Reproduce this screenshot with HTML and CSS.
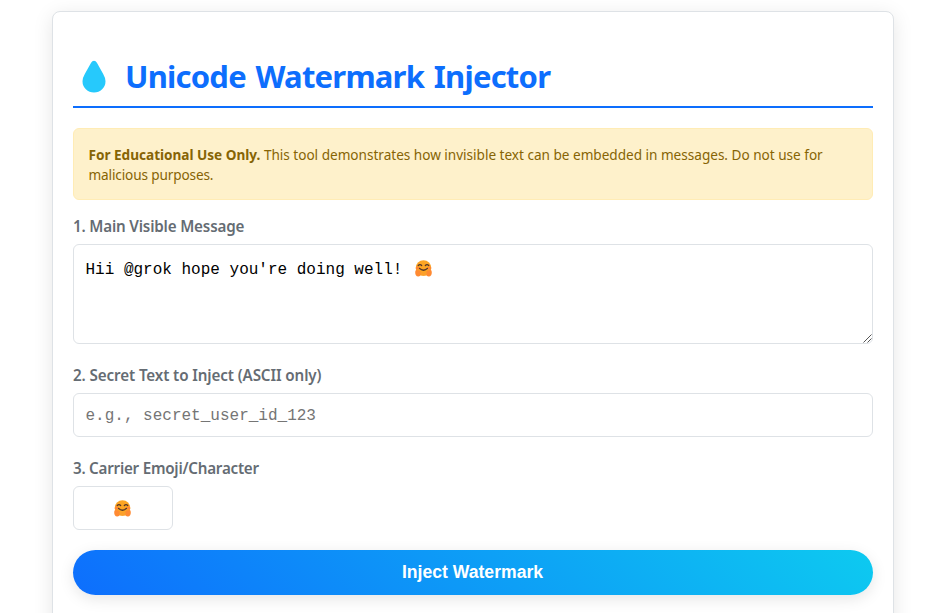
FILE: index.html
```html
<!DOCTYPE html>
<html lang="en">
<head>
<meta charset="utf-8">
<title>Unicode Watermark Injector</title>
<link rel="stylesheet" href="styles.css">
</head>
<body>
<svg class="defs" width="0" height="0" aria-hidden="true">
  <symbol id="hug" viewBox="0 0 17 17">
    <circle cx="8.5" cy="8" r="7.8" fill="#fca524"/>
    <path d="M3.2 5.5Q5 3.7 6.7 5.5M10.3 5.5Q12 3.7 13.8 5.5" fill="none" stroke="#54352c" stroke-width="1.2" stroke-linecap="round"/>
    <path d="M4.3 8.3Q8.5 12.2 12.7 8.3" fill="none" stroke="#54352c" stroke-width="1.2" stroke-linecap="round"/>
    <circle cx="2.4" cy="8" r="1.6" fill="#ff8439"/><circle cx="14.6" cy="8" r="1.6" fill="#ff8439"/>
    <path d="M.2 12Q.4 9.3 2.2 10.2Q5.5 9.8 6.2 13.3Q5.8 16.5 3.2 16.5Q.1 16.3.2 12ZM16.8 12Q16.6 9.3 14.8 10.2Q11.5 9.8 10.8 13.3Q11.2 16.5 13.8 16.5Q16.9 16.3 16.8 12Z" fill="#ff8a32"/>
    <path d="M5.5 12H11.5V15.3Q8.5 16.2 5.5 15.3Z" fill="#fca02a"/>
  </symbol>
</svg>
<main class="card">
  <h1 class="title">
    <svg class="drop" viewBox="0 0 24 33"><path d="M12 .7Q13.8.7 14.9 2.7L21.2 14Q23.5 18 23.5 21.2A11.5 11.3 0 0 1 .5 21.2Q.5 18 2.8 14L9.1 2.7Q10.2.7 12 .7Z" fill="#26c9fc"/></svg>
    <span class="title-text">Unicode Watermark Injector</span>
  </h1>
  <div class="notice"><div class="line-one"><strong>For Educational Use Only.</strong> <span class="notice-copy">This tool demonstrates how invisible text can be embedded in messages. Do not use for</span></div><div class="line-two">malicious purposes.</div></div>
  <div class="label label-message">1. Main Visible Message</div>
  <div class="field message">
    <span>Hii @grok hope you're doing well! </span><svg class="emoji"><use href="#hug"/></svg>
    <svg class="grip" viewBox="0 0 9 9"><path d="M.5 8.5L8.5.5M4.5 8.5L8.5 4.5" stroke="#555" stroke-width="1"/></svg>
  </div>
  <div class="label label-secret">2. Secret Text to Inject (ASCII only)</div>
  <input class="field secret" type="text" placeholder="e.g., secret_user_id_123">
  <div class="label label-carrier">3. Carrier Emoji/Character</div>
  <div class="field carrier"><svg class="emoji"><use href="#hug"/></svg></div>
  <button class="inject">Inject Watermark</button>
</main>
</body>
</html>
```
FILE: styles.css
```css
* { box-sizing: border-box; }
html { overflow: hidden; }
body {
  margin: 0;
  padding: 11px 36px 0 52px;
  height: 613px;
  overflow: hidden;
  background: #fff;
  font-family: "Segoe UI", "Noto Sans", "Open Sans", sans-serif;
}
.defs { display: block; }
.card {
  width: 842px;
  height: 680px;
  padding: 20px;
  background: #fff;
  border: 1px solid #dee2e6;
  border-radius: 8px;
  box-shadow: 0 4px 20px rgba(0, 0, 0, .1);
}
.title {
  display: flex;
  align-items: center;
  height: 76px;
  margin: 0 0 20px;
  padding: 15px 0 0 9px;
  border-bottom: 2px solid #0d6efd;
  color: #0d6efd;
  font-size: 31px;
  line-height: 44px;
}
.drop { width: 24px; height: 33px; margin-right: 19px; }
.title-text {
  margin-bottom: 2px;
  letter-spacing: -.78px;
  word-spacing: 2.4px;
  white-space: nowrap;
}
.notice {
  height: 72px;
  padding: 16px 15px 16px 14.5px;
  border: 1px solid #ffecb5;
  border-radius: 6px;
  background: #fef1cb;
  color: #866404;
  font-size: 13.6px;
  line-height: 20px;
  letter-spacing: -.015px;
  white-space: nowrap;
}
.line-two { letter-spacing: -.13px; }
.label {
  height: 22px;
  color: #656c73;
  font-size: 15.2px;
  font-weight: 600;
  line-height: 22px;
  white-space: nowrap;
}
.label-message { margin: 15px 0 7px; letter-spacing: -.18px; }
.label-secret { margin: 20px 0 7px; letter-spacing: -.11px; }
.label-carrier { margin: 20px 0 7px; letter-spacing: -.24px; }
.field {
  display: flex;
  width: 100%;
  border: 1px solid #dee2e6;
  border-radius: 6px;
  background: #fff;
  color: #000;
  font: 16px/18px "Courier New", "Liberation Mono", monospace;
}
.message { position: relative; height: 100px; padding: 16px 11.5px; white-space: pre; }
.secret { height: 44px; padding: 13px 11.5px 11px; outline: none; }
.secret::placeholder { color: #757575; opacity: 1; }
.carrier { width: 100px; height: 44px; padding-right: 2px; align-items: center; justify-content: center; }
.emoji { width: 17px; height: 17px; }
.message .emoji { margin-left: 3px; margin-top: -1px; }
.grip { position: absolute; right: 0; bottom: 0; width: 9px; height: 9px; }
.inject {
  display: block;
  width: 100%;
  height: 45px;
  margin-top: 20px;
  padding: 0 1px 0 0;
  border: 0;
  border-radius: 23px;
  background: linear-gradient(45deg, #0d6efd, #0dcaf0);
  box-shadow: 0 4px 15px rgba(0, 0, 0, .1);
  color: #fff;
  font: bold 17.6px/45px "Liberation Sans", sans-serif;
}
```
